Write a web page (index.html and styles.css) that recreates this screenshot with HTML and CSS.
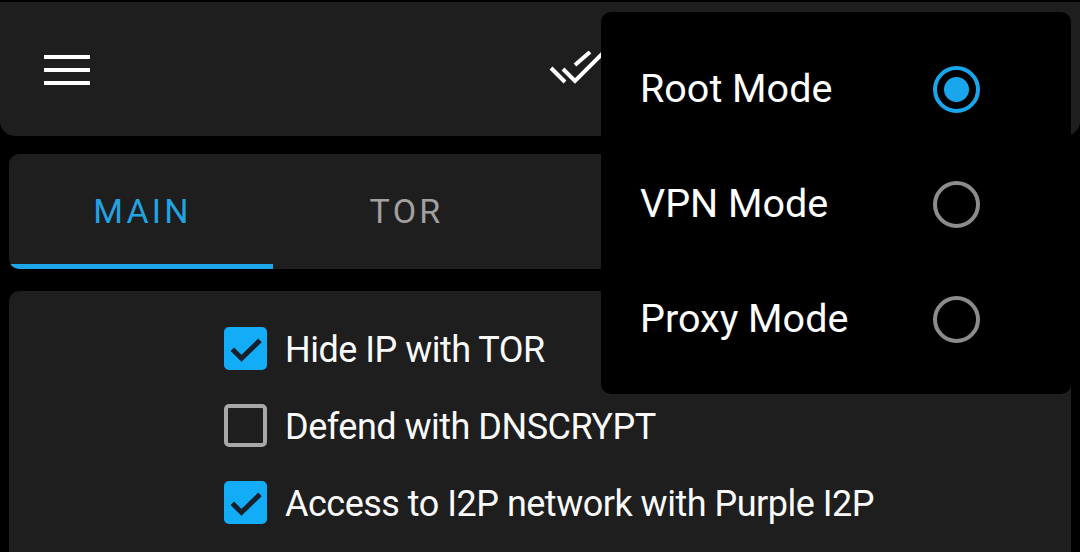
FILE: index.html
```html
<!DOCTYPE html>
<html>
<head>
<meta charset="utf-8">
<link rel="stylesheet" href="styles.css">
</head>
<body>
<div class="screen">
  <header class="toolbar">
    <button class="icon-btn menu-btn" aria-label="Menu">
      <span class="bar"></span><span class="bar"></span><span class="bar"></span>
    </button>
    <svg class="done-all" width="60" height="40" viewBox="0 0 60 40">
      <g stroke="#fff" stroke-width="4" fill="none" stroke-linecap="butt">
        <line x1="2" y1="17" x2="16" y2="31"/>
        <polyline points="14,18 26,30 56,0"/>
        <line x1="26" y1="14" x2="41" y2="1"/>
      </g>
    </svg>
  </header>

  <nav class="tabs">
    <div class="tab active">MAIN</div>
    <div class="tab">TOR</div>
  </nav>

  <section class="card">
    <label class="row">
      <span class="box checked"><svg viewBox="0 0 24 24"><path d="M3.8 12.2L9.3 17.6L20.4 6.8" /></svg></span>
      <span class="label">Hide IP with TOR</span>
    </label>
    <label class="row">
      <span class="box"></span>
      <span class="label">Defend with DNSCRYPT</span>
    </label>
    <label class="row">
      <span class="box checked"><svg viewBox="0 0 24 24"><path d="M3.8 12.2L9.3 17.6L20.4 6.8" /></svg></span>
      <span class="label">Access to I2P network with Purple I2P</span>
    </label>
  </section>

  <div class="popup">
    <div class="item"><span class="item-text">Root Mode</span><span class="radio on"></span></div>
    <div class="item"><span class="item-text">VPN Mode</span><span class="radio"></span></div>
    <div class="item"><span class="item-text">Proxy Mode</span><span class="radio"></span></div>
  </div>
</div>
</body>
</html>
```

FILE: styles.css
```css
html, body {
  margin: 0;
  padding: 0;
  background: #000;
  width: 1080px;
  height: 552px;
  overflow: hidden;
  font-family: Roboto, "Noto Sans", sans-serif;
  color: #fff;
}

.screen {
  position: relative;
  width: 1080px;
  height: 552px;
  padding-top: 2px;
  box-sizing: border-box;
  display: flex;
  flex-direction: column;
}

.toolbar {
  flex: 0 0 134px;
  background: #1e1e1e;
  border-radius: 0 0 15px 15px;
  display: flex;
  align-items: center;
  position: relative;
}

.icon-btn {
  background: none;
  border: 0;
  padding: 0;
}

.menu-btn {
  margin-left: 44px;
  margin-top: 2px;
  display: flex;
  flex-direction: column;
  gap: 9px;
}

.menu-btn .bar {
  display: block;
  width: 46px;
  height: 4px;
  background: #fff;
}

.done-all {
  margin-left: 459px;
  margin-top: 4px;
}

.tabs {
  margin: 18px 9px 0;
  flex: 0 0 115px;
  background: #1e1e1e;
  border-radius: 10px;
  display: flex;
  overflow: hidden;
}

.tab {
  flex: 0 0 264px;
  display: flex;
  align-items: center;
  justify-content: center;
  font-size: 34px;
  letter-spacing: 3.2px;
  color: #a0a0a0;
  padding: 0 0 2px 3px;
  box-sizing: border-box;
  position: relative;
}

.tab.active {
  color: #22a3e2;
}

.tab.active::after {
  content: "";
  position: absolute;
  left: 1px;
  right: 0;
  bottom: 0;
  height: 5px;
  background: #1ea6ea;
  border-bottom-left-radius: 6px;
}

.card {
  margin: 22px 9px 0;
  flex: 1 1 auto;
  background: #1e1e1e;
  border-radius: 10px 10px 0 0;
  padding: 36px 0 0 215px;
  box-sizing: border-box;
  display: flex;
  flex-direction: column;
  gap: 34px;
}

.row {
  display: flex;
  align-items: center;
  height: 43px;
}

.box {
  width: 43px;
  height: 43px;
  box-sizing: border-box;
  border: 4px solid #a8a8a8;
  border-radius: 5px;
  display: flex;
  align-items: center;
  justify-content: center;
}

.box.checked {
  background: #12adf6;
  border-color: #12adf6;
}

.box svg {
  width: 40px;
  height: 40px;
  flex: 0 0 40px;
  fill: none;
  stroke: #15202a;
  stroke-width: 3;
}

.label {
  margin-left: 18px;
  font-size: 36px;
  letter-spacing: -0.5px;
  color: #fafafa;
  padding-top: 2px;
}

.popup {
  position: absolute;
  left: 601px;
  top: 12px;
  width: 470px;
  height: 382px;
  background: #000;
  border-radius: 10px;
  padding: 20px 0 0 39px;
  box-sizing: border-box;
  display: flex;
  flex-direction: column;
}

.item {
  height: 115px;
  display: flex;
  align-items: center;
}

.item-text {
  width: 293px;
  font-size: 39.5px;
  color: #fff;
  padding-bottom: 2px;
}

.radio {
  width: 47px;
  height: 47px;
  box-sizing: border-box;
  border: 4px solid #8c8c8c;
  border-radius: 50%;
  display: flex;
  align-items: center;
  justify-content: center;
}

.radio.on {
  border-color: #1aa6ec;
}

.radio.on::after {
  content: "";
  width: 25px;
  height: 25px;
  border-radius: 50%;
  background: #1aa6ec;
}
```
